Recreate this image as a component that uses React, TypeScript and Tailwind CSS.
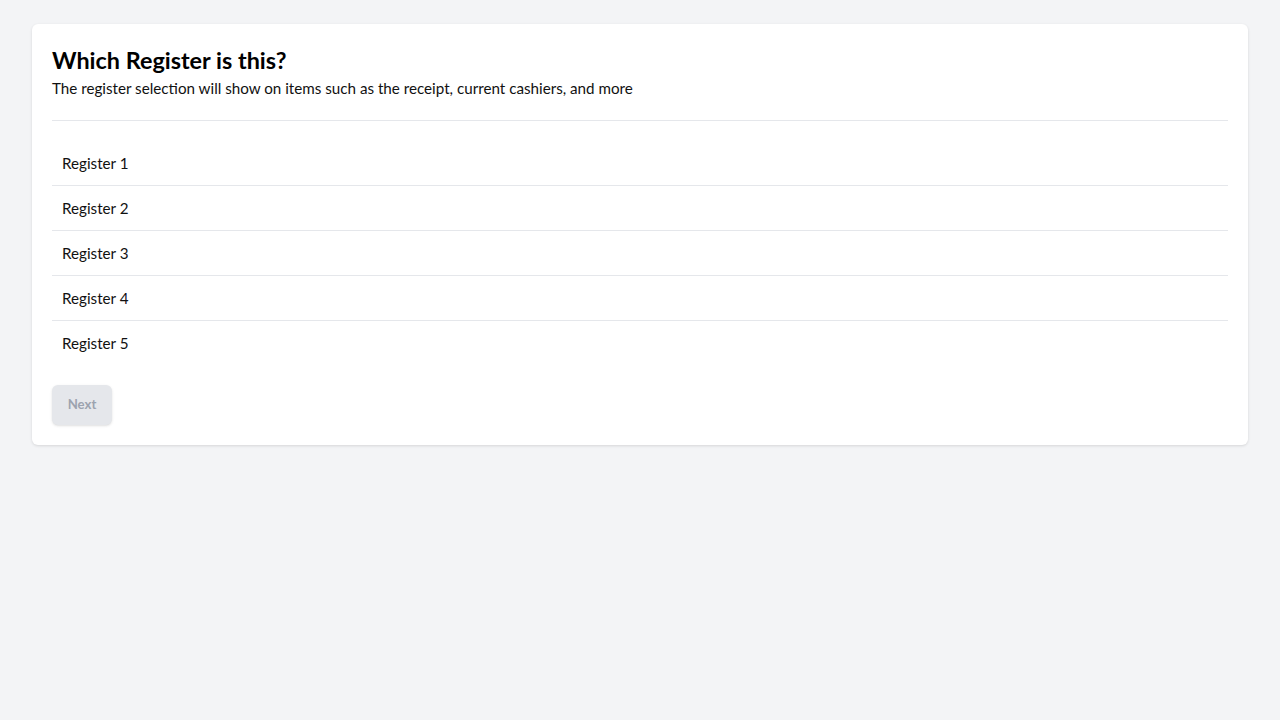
const registers = ["Register 1", "Register 2", "Register 3", "Register 4", "Register 5"];

export default function App() {
  return (
    <div
      className="min-h-screen bg-[#f3f4f6] px-8 pt-6"
      style={{ fontFamily: "Lato, 'Noto Sans', sans-serif" }}
    >
      <div className="rounded-md bg-white p-5 shadow-[0_1px_3px_rgba(0,0,0,0.12)]">
        <div className="border-b border-gray-200 pb-5">
          <h1 className="text-[23.4px] font-bold leading-8 text-black">Which Register is this?</h1>
          <p className="text-[15.2px] leading-6 text-[#111]">
            The register selection will show on items such as the receipt, current cashiers, and more
          </p>
        </div>

        <ul className="mt-5">
          {registers.map((name, i) => (
            <li
              key={name}
              className={`flex h-11 items-center px-2.5 text-[15.2px] text-[#111] ${
                i < registers.length - 1 ? "box-content border-b border-gray-200" : ""
              }`}
            >
              {name}
            </li>
          ))}
        </ul>

        <button
          disabled
          className="mt-5 h-10 w-[60px] rounded-md bg-[#e5e7eb] text-[13.2px] font-bold text-[#9ca3af] shadow-sm"
        >
          Next
        </button>
      </div>
    </div>
  );
}
